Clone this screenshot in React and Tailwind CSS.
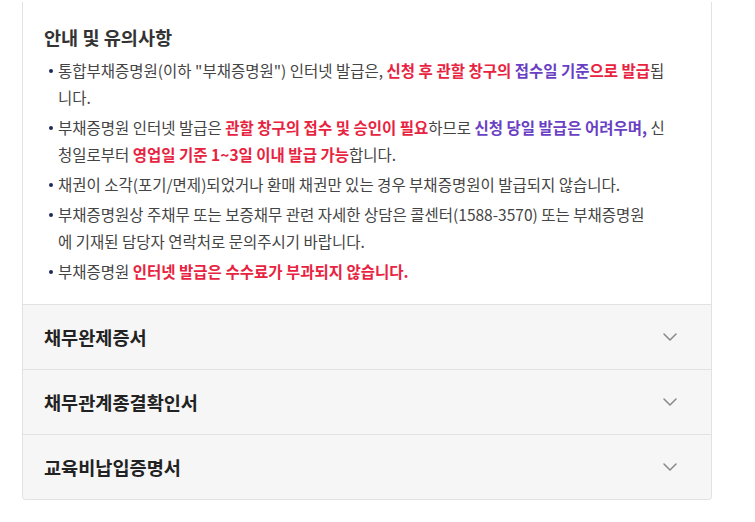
import { ChevronDown } from 'lucide-react'

const font = { fontFamily: '"Noto Sans CJK KR", "Noto Sans", sans-serif' }

function Red({ children }) {
  return <strong className="font-bold text-[#e8233f]">{children}</strong>
}

function Purple({ children }) {
  return <strong className="font-bold text-[#6a3fc4]">{children}</strong>
}

function Item({ children }) {
  return (
    <li className="relative pl-[14px] before:content-[''] before:absolute before:left-[5px] before:top-[12px] before:w-[4px] before:h-[4px] before:rounded-full before:bg-[#1e2a5a]">
      {children}
    </li>
  )
}

function Row({ title }) {
  return (
    <div className="flex items-center justify-between h-[65px] border-t border-[#e2e2e2] bg-[#f6f6f6] pl-[21px] pr-[29px]">
      <span className="text-[18.6px] font-bold text-[#222]">{title}</span>
      <ChevronDown size={24} strokeWidth={1.5} className="text-[#888]" />
    </div>
  )
}

export default function App() {
  return (
    <div className="bg-white w-[755px] h-[522px]" style={font}>
      <div className="ml-[22px] mt-[2px] w-[690px] border-x border-b border-[#e2e2e2] rounded-b-[4px] overflow-hidden">
        <div className="pt-[22px] pb-[19px] pl-[21px] pr-[42px]">
          <h3 className="text-[18.6px] leading-[26px] font-semibold text-[#333]">안내 및 유의사항</h3>
          <ul className="mt-[7px] space-y-[3px] text-[15.5px] leading-[27px] text-[#444]">
            <Item>
              통합부채증명원(이하 "부채증명원") 인터넷 발급은, <Red>신청 후 관할 창구의</Red> <Purple>접수일 기준</Purple><Red>으로 발급</Red>됩니다.
            </Item>
            <Item>
              부채증명원 인터넷 발급은 <Red>관할 창구의 접수 및 승인이 필요</Red>하므로 <Purple>신청 당일 발급은 어려우며,</Purple> 신청일로부터 <Red>영업일 기준 1~3일 이내 발급 가능</Red>합니다.
            </Item>
            <Item>채권이 소각(포기/면제)되었거나 환매 채권만 있는 경우 부채증명원이 발급되지 않습니다.</Item>
            <Item>
              부채증명원상 주채무 또는 보증채무 관련 자세한 상담은 콜센터(1588-3570) 또는 부채증명원
              <br />에 기재된 담당자 연락처로 문의주시기 바랍니다.
            </Item>
            <Item>
              부채증명원 <Red>인터넷 발급은 수수료가 부과되지 않습니다.</Red>
            </Item>
          </ul>
        </div>
        <Row title="채무완제증서" />
        <Row title="채무관계종결확인서" />
        <Row title="교육비납입증명서" />
      </div>
    </div>
  )
}
